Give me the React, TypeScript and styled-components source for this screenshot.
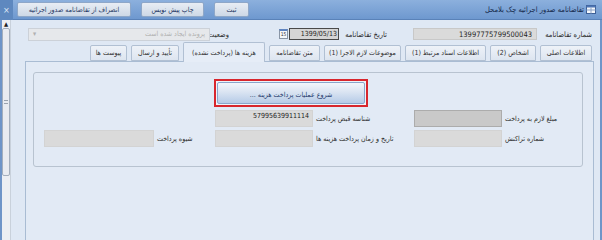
import styled, { createGlobalStyle } from "styled-components"

const GlobalStyle = createGlobalStyle`
  html, body {
    margin: 0;
    padding: 0;
    background: #dfe8f4;
  }
  body {
    font-family: "DejaVu Sans Condensed", "DejaVu Sans", sans-serif;
    font-size: 7.5px;
    color: #2b2b2b;
  }
  * { box-sizing: border-box; }
`

const Window = styled.div`
  width: 602px;
  height: 240px;
  display: flex;
  flex-direction: column;
  overflow: hidden;
  background: #dfe8f4;
`

const TitleBar = styled.div`
  height: 20px;
  flex: none;
  direction: rtl;
  display: flex;
  align-items: center;
  padding-right: 6px;
  background: linear-gradient(#8cb0dd, #6e98cf);
  border-bottom: 1px solid #5a82b8;
`

const TitleIcon = styled.svg`
  width: 10px;
  height: 9px;
  margin-left: 2px;
  flex: none;
`

const TitleText = styled.span`
  font-size: 7.5px;
  color: #14284a;
  white-space: nowrap;
`

const ButtonGroup = styled.div`
  margin-right: auto;
  display: flex;
  gap: 10px;
  margin-left: 4px;
`

const BarButton = styled.button<{ $w: number }>`
  width: ${(p) => p.$w}px;
  height: 15px;
  padding: 0;
  font-family: inherit;
  font-size: 7px;
  color: #1d3461;
  background: linear-gradient(#e8edf4, #cdd8e6);
  border: 1px solid #8ea7c8;
  border-radius: 2px;
  white-space: nowrap;
  overflow: hidden;
`

const CloseBox = styled.div`
  width: 13px;
  height: 20px;
  display: flex;
  align-items: center;
  justify-content: center;
  background: #5e88bf;
  color: #dfe9f7;
  font-size: 9px;
`

const Body = styled.div`
  flex: 1;
  display: flex;
  border-left: 2px solid #6f95c8;
  border-right: 2px solid #6f95c8;
  min-height: 0;
`

const ScrollTrack = styled.div`
  width: 9px;
  flex: none;
  display: flex;
  flex-direction: column;
  align-items: center;
  background: #eceff3;
  border-right: 1px solid #c9d1db;
`

const ScrollArrow = styled.div`
  height: 8px;
  font-size: 6px;
  line-height: 8px;
  color: #222;
`

const ScrollThumb = styled.div`
  width: 8px;
  height: 148px;
  border: 1px solid #a4afbd;
  border-radius: 2px;
  background: #e9ecf1;
  display: flex;
  align-items: center;
  justify-content: center;
`

const Grip = styled.div`
  width: 4px;
  height: 4px;
  border-top: 1px solid #9aa3ae;
  border-bottom: 1px solid #9aa3ae;
`

const Content = styled.div`
  flex: 1;
  direction: rtl;
  display: flex;
  flex-direction: column;
  margin-left: 14px;
  margin-right: 6px;
  min-width: 0;
`

const HeaderRow = styled.div`
  display: flex;
  align-items: center;
  padding-top: 8px;
  padding-right: 2px;
  height: 20px;
  flex: none;
`

const HeadLabel = styled.span<{ $w: number; $mr?: number }>`
  width: ${(p) => p.$w}px;
  margin-right: ${(p) => p.$mr ?? 0}px;
  white-space: nowrap;
  font-size: 7.5px;
  flex: none;
`

const HeadField = styled.div<{ $w: number; $mr?: number; $dark?: boolean }>`
  width: ${(p) => p.$w}px;
  margin-right: ${(p) => p.$mr ?? 0}px;
  height: 12px;
  flex: none;
  direction: ltr;
  text-align: right;
  padding: 0 ${(p) => (p.$dark ? 1 : 4)}px;
  font-size: ${(p) => (p.$dark ? 7 : 7.5)}px;
  line-height: 11px;
  background: ${(p) => (p.$dark ? "#d5d5d5" : "#dadada")};
  border: 1px solid ${(p) => (p.$dark ? "#4a4a4a" : "#c8c8c8")};
  color: #1f1f1f;
  white-space: nowrap;
  overflow: hidden;
`

const CalIcon = styled.div`
  width: 9px;
  height: 10px;
  margin-right: 1px;
  flex: none;
  border: 1px solid #8a96a6;
  border-top: 2px solid #5f84c0;
  background: #f6f8fb;
  font-size: 5px;
  line-height: 7px;
  text-align: center;
  direction: ltr;
  color: #333;
`

const StatusSelect = styled.div`
  width: 182px;
  margin-right: 2px;
  height: 13px;
  flex: none;
  display: flex;
  align-items: center;
  justify-content: space-between;
  padding: 0 4px;
  background: #e6e8eb;
  border: 1px solid #ccd1d8;
  color: #b0b0b0;
  font-size: 7px;
  white-space: nowrap;
`

const TabRow = styled.div`
  display: flex;
  align-items: flex-end;
  gap: 4px;
  height: 21px;
  padding-right: 2px;
  flex: none;
  position: relative;
  z-index: 1;
`

const Tab = styled.div<{ $w: number; $active?: boolean }>`
  width: ${(p) => p.$w}px;
  height: ${(p) => (p.$active ? 20 : 16)}px;
  margin-bottom: ${(p) => (p.$active ? -1 : 0)}px;
  flex: none;
  display: flex;
  align-items: center;
  justify-content: center;
  font-size: 7px;
  color: #2e2e2e;
  white-space: nowrap;
  border: 1px solid #b1c0d3;
  border-bottom: ${(p) => (p.$active ? "none" : "1px solid #b1c0d3")};
  border-radius: 2px 2px 0 0;
  background: ${(p) => (p.$active ? "#e6edf7" : "linear-gradient(#eef2f8, #dde5f0)")};
`

const TabPanel = styled.div`
  flex: 1;
  border: 1px solid #a9bcd3;
  border-bottom: none;
  background: #e2eaf5;
  padding: 10px 10px 0 7px;
`

const Fieldset = styled.div`
  border: 1px solid #b8c3d0;
  border-radius: 3px;
  padding: 6px 0 19px 7px;
  display: grid;
  grid-template-columns: 80px 88px 101px 98px 61px 110px;
  grid-template-rows: 28px 17px 17px;
  row-gap: 3px;
  align-items: center;
`

const RedFrame = styled.div`
  grid-column: 3 / 5;
  grid-row: 1;
  justify-self: end;
  width: 154px;
  height: 28px;
  border: 2px solid #d8262d;
  padding: 1px;
  background: #eef3f9;
  margin-left: -1px;
`

const StartButton = styled.button`
  width: 100%;
  height: 100%;
  padding: 4px 0 0;
  font-family: inherit;
  font-size: 7px;
  color: #243a6c;
  border: 1px solid #8aa5cb;
  border-radius: 2px;
  background: linear-gradient(#f3f6fb, #dae4f2 45%, #b6cbe7);
  white-space: nowrap;
`

const Label = styled.span<{ $row: number; $col: number }>`
  grid-row: ${(p) => p.$row};
  grid-column: ${(p) => p.$col};
  text-align: left;
  padding-left: 3px;
  font-size: 7px;
  white-space: nowrap;
  color: #2a2a2a;
`

const Input = styled.div<{ $row: number; $col: number; $dark?: boolean }>`
  grid-row: ${(p) => p.$row};
  grid-column: ${(p) => p.$col};
  height: 17px;
  direction: ltr;
  text-align: right;
  padding: 1px 3px 0;
  font-size: 7px;
  line-height: 9px;
  color: #222;
  background: ${(p) => (p.$dark ? "#c9c9c9" : "#dadada")};
  border: 1px solid ${(p) => (p.$dark ? "#acacac" : "#d3d3d3")};
  white-space: nowrap;
`

const tabs = [
  { name: "اطلاعات اصلی", w: 52 },
  { name: "اشخاص (2)", w: 46 },
  { name: "اطلاعات اسناد مرتبط (1)", w: 81 },
  { name: "موضوعات لازم الاجرا (1)", w: 77 },
  { name: "متن تقاضانامه", w: 51 },
  { name: "هزینه ها (پرداخت نشده)", w: 82, active: true },
  { name: "تأیید و ارسال", w: 48 },
  { name: "پیوست ها", w: 37 },
]

export default function App() {
  return (
    <>
      <GlobalStyle />
      <Window>
        <TitleBar>
          <TitleIcon viewBox="0 0 10 9">
            <rect x="0.5" y="0.5" width="9" height="8" fill="#f4f7fb" stroke="#3c5f96" />
            <rect x="0.5" y="0.5" width="9" height="2" fill="#4d75b3" />
            <line x1="0.5" y1="5" x2="9.5" y2="5" stroke="#8aa2c6" />
            <line x1="5" y1="2.5" x2="5" y2="8.5" stroke="#8aa2c6" />
          </TitleIcon>
          <TitleText>تقاضانامه صدور اجرائیه چک بلامحل</TitleText>
          <ButtonGroup>
            <BarButton $w={35}>ثبت</BarButton>
            <BarButton $w={63}>چاپ پیش نویس</BarButton>
            <BarButton $w={114}>انصراف از تقاضانامه صدور اجرائیه</BarButton>
          </ButtonGroup>
          <CloseBox>×</CloseBox>
        </TitleBar>
        <Body>
          <ScrollTrack>
            <ScrollArrow>▲</ScrollArrow>
            <ScrollThumb>
              <Grip />
            </ScrollThumb>
          </ScrollTrack>
          <Content>
            <HeaderRow>
              <HeadLabel $w={52}>شماره تقاضانامه</HeadLabel>
              <HeadField $w={124} $mr={3}>13997775799500043</HeadField>
              <HeadLabel $w={42} $mr={26}>تاریخ تقاضانامه</HeadLabel>
              <HeadField $w={50} $mr={6} $dark>1399/05/13</HeadField>
              <CalIcon>15</CalIcon>
              <HeadLabel $w={17} $mr={50}>وضعیت</HeadLabel>
              <StatusSelect>
                <span>پرونده ایجاد شده است</span>
                <span>▾</span>
              </StatusSelect>
            </HeaderRow>
            <TabRow>
              {tabs.map((t, i) => (
                <Tab key={i} $w={t.w} $active={t.active}>
                  {t.name}
                </Tab>
              ))}
            </TabRow>
            <TabPanel>
              <Fieldset>
                <RedFrame>
                  <StartButton>شروع عملیات پرداخت هزینه ...</StartButton>
                </RedFrame>

                <Label $row={2} $col={1}>مبلغ لازم به پرداخت</Label>
                <Input $row={2} $col={2} $dark />
                <Label $row={2} $col={3}>شناسه قبض پرداخت</Label>
                <Input $row={2} $col={4}>57995639911114</Input>

                <Label $row={3} $col={1}>شماره تراکنش</Label>
                <Input $row={3} $col={2} />
                <Label $row={3} $col={3}>تاریخ و زمان پرداخت هزینه ها</Label>
                <Input $row={3} $col={4} />
                <Label $row={3} $col={5}>شیوه پرداخت</Label>
                <Input $row={3} $col={6} />
              </Fieldset>
            </TabPanel>
          </Content>
        </Body>
      </Window>
    </>
  )
}
